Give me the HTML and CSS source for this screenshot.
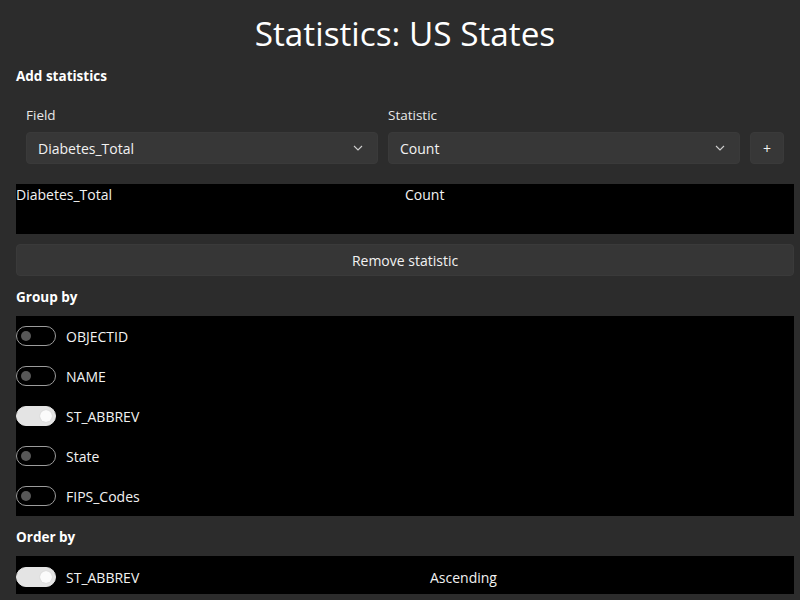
FILE: index.html
```html
<!DOCTYPE html>
<html>
<head>
<meta charset="utf-8">
<link rel="stylesheet" href="styles.css">
</head>
<body>
<div class="page">
  <h1 class="title">Statistics: US States</h1>
  <div class="section-title">Add statistics</div>
  <div class="add-row">
    <div class="field-col">
      <div class="label">Field</div>
      <div class="combo"><span>Diabetes_Total</span>
        <svg class="chev" width="10" height="6" viewBox="0 0 10 6"><path d="M1 1 L5 5 L9 1" fill="none" stroke="#cfcfcf" stroke-width="1.1"/></svg>
      </div>
    </div>
    <div class="field-col">
      <div class="label">Statistic</div>
      <div class="combo"><span>Count</span>
        <svg class="chev" width="10" height="6" viewBox="0 0 10 6"><path d="M1 1 L5 5 L9 1" fill="none" stroke="#cfcfcf" stroke-width="1.1"/></svg>
      </div>
    </div>
    <div class="plus">+</div>
  </div>
  <div class="stat-list">
    <div class="stat-row"><span>Diabetes_Total</span><span>Count</span></div>
  </div>
  <div class="remove-btn">Remove statistic</div>
  <div class="section-title gap">Group by</div>
  <div class="toggle-list">
    <div class="trow"><span class="toggle"></span><span>OBJECTID</span></div>
    <div class="trow"><span class="toggle"></span><span>NAME</span></div>
    <div class="trow"><span class="toggle on"></span><span>ST_ABBREV</span></div>
    <div class="trow"><span class="toggle"></span><span>State</span></div>
    <div class="trow"><span class="toggle"></span><span>FIPS_Codes</span></div>
  </div>
  <div class="section-title gap">Order by</div>
  <div class="order-list">
    <div class="orow"><span class="toggle on"></span><span class="oname">ST_ABBREV</span><span>Ascending</span></div>
  </div>
</div>
</body>
</html>
```
FILE: styles.css
```css
html, body {
  margin: 0;
  padding: 0;
  background: #2c2c2c;
  height: 100%;
  overflow: hidden;
}
body {
  font-family: "Open Sans", "Noto Sans", sans-serif;
  font-size: 14px;
  color: #f2f2f2;
}
.page {
  padding: 0 6px 0 16px;
}
.title {
  margin: 0;
  padding-top: 8px;
  height: 56px;
  line-height: 50px;
  font-size: 33.3px;
  font-weight: 400;
  text-align: center;
  color: #ffffff;
}
.section-title {
  height: 24px;
  line-height: 24px;
  font-weight: 700;
  font-size: 13.5px;
  color: #ffffff;
}
.section-title.gap {
  margin-top: 9px;
}
.add-row {
  display: flex;
  align-items: flex-end;
  gap: 10px;
  padding: 16px 10px 0 10px;
}
.field-col {
  flex: 1;
  display: flex;
  flex-direction: column;
  gap: 6px;
}
.label {
  line-height: 22px;
  height: 22px;
  font-size: 13.5px;
  color: #e8e8e8;
}
.combo {
  height: 32px;
  box-sizing: border-box;
  background: #373737;
  border: 1px solid #3a3a3a;
  border-radius: 4px;
  display: flex;
  align-items: center;
  justify-content: space-between;
  padding: 0 14px 0 11px;
}
.chev { display: block; }
.plus {
  width: 34px;
  height: 32px;
  box-sizing: border-box;
  background: #373737;
  border: 1px solid #3a3a3a;
  border-radius: 4px;
  display: flex;
  align-items: center;
  justify-content: center;
  font-size: 14px;
}
.stat-list {
  margin-top: 20px;
  height: 50px;
  background: #000;
}
.stat-row {
  display: grid;
  grid-template-columns: 1fr 1fr;
  line-height: 22px;
}
.remove-btn {
  margin-top: 10px;
  height: 32px;
  box-sizing: border-box;
  background: #363636;
  border: 1px solid #3a3a3a;
  border-radius: 4px;
  display: flex;
  align-items: center;
  justify-content: center;
}
.toggle-list {
  margin-top: 7px;
  background: #000;
}
.trow {
  height: 40px;
  display: flex;
  align-items: center;
  gap: 10px;
}
.orow {
  height: 42px;
  display: grid;
  grid-template-columns: 50px 1fr 1fr;
  align-items: center;
}
.order-list {
  margin-top: 7px;
  height: 38px;
  background: #000;
  overflow: hidden;
}
.toggle {
  position: relative;
  width: 40px;
  height: 20px;
  box-sizing: border-box;
  border: 1px solid #9c9c9c;
  border-radius: 10px;
  flex: none;
}
.toggle::after {
  content: "";
  position: absolute;
  left: 4px;
  top: 4px;
  width: 10px;
  height: 10px;
  border-radius: 50%;
  background: #585858;
}
.toggle.on {
  background: #e4e4e4;
  border-color: #e4e4e4;
}
.toggle.on::after {
  left: auto;
  right: 3px;
  top: 3px;
  width: 12px;
  height: 12px;
  background: #fbfbfb;
  box-shadow: 0 0 1px #bbb;
}
```
